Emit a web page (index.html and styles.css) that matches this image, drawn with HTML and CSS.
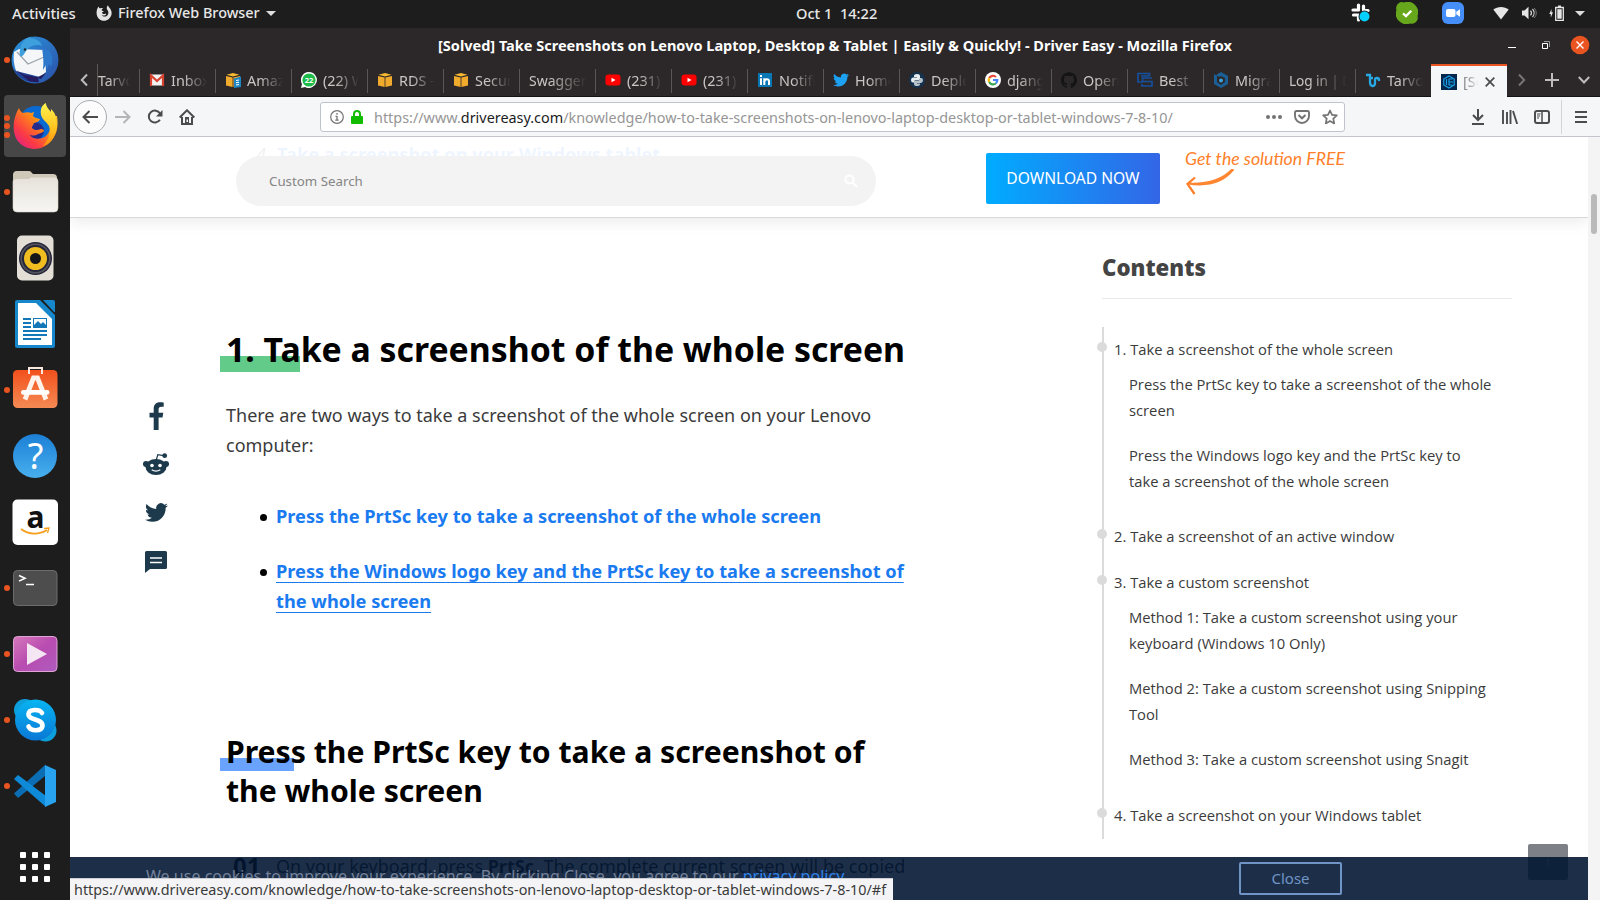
FILE: index.html
```html
<!DOCTYPE html>
<html lang="en">
<head>
<meta charset="utf-8">
<title>Desktop</title>
<link rel="stylesheet" href="styles.css">
</head>
<body>
<svg class="defs" aria-hidden="true">
  <defs>
    <symbol id="bird" viewBox="0 0 24 24"><path d="M23.953 4.57a10 10 0 01-2.825.775 4.958 4.958 0 002.163-2.723c-.951.555-2.005.959-3.127 1.184a4.92 4.92 0 00-8.384 4.482C7.69 8.095 4.067 6.13 1.64 3.162a4.822 4.822 0 00-.666 2.475c0 1.71.87 3.213 2.188 4.096a4.904 4.904 0 01-2.228-.616v.06a4.923 4.923 0 003.946 4.827 4.996 4.996 0 01-2.212.085 4.936 4.936 0 004.604 3.417 9.867 9.867 0 01-6.102 2.105c-.39 0-.779-.023-1.17-.067a13.995 13.995 0 007.557 2.209c9.053 0 13.998-7.496 13.998-13.985 0-.21 0-.42-.015-.63A9.935 9.935 0 0024 4.59z"/></symbol>
    <symbol id="cube" viewBox="0 0 16 16"><path fill="#f0ab2c" d="M1 4l6.600 1.600V15L1 13.400zM15 4L8.400 5.600V15l6.600-1.600z"/><path fill="#f7b92f" d="M1.500 2.800L8 1l6.500 1.800L8 4.600z"/></symbol>
    <symbol id="tube" viewBox="0 0 16 16"><rect x=".5" y="2.500" width="15" height="11" rx="3" fill="#f00"/><path fill="#fff" d="M6.500 5.700v4.600l4-2.300z"/></symbol>
    <linearGradient id="gBlue" x1="0" y1="0" x2="0" y2="1"><stop offset="0" stop-color="#1c7fd6"/><stop offset="1" stop-color="#48b0ee"/></linearGradient>
    <linearGradient id="gSky" x1="0" y1="0" x2="0" y2="1"><stop offset="0" stop-color="#08b5f2"/><stop offset="1" stop-color="#0a77d5"/></linearGradient>
    <linearGradient id="gOrange" x1="0" y1="0" x2="0" y2="1"><stop offset="0" stop-color="#f2501c"/><stop offset="1" stop-color="#f58a54"/></linearGradient>
    <linearGradient id="gPink" x1="0" y1="0" x2="1" y2="1"><stop offset="0" stop-color="#d779bb"/><stop offset=".5" stop-color="#b94cb0"/><stop offset="1" stop-color="#ae5cbf"/></linearGradient>
    <linearGradient id="gFox" x1="1" y1="0" x2="0" y2="1"><stop offset="0" stop-color="#ffd92e"/><stop offset=".4" stop-color="#ff8a16"/><stop offset=".7" stop-color="#fb3a45"/><stop offset="1" stop-color="#d8189a"/></linearGradient>
    <linearGradient id="gFlame" x1="0" y1="0" x2="0" y2="1"><stop offset="0" stop-color="#fff44f"/><stop offset=".6" stop-color="#ffc21f"/><stop offset="1" stop-color="#ff8f10"/></linearGradient>
    <linearGradient id="gBirdBlue" x1="0" y1="0" x2="1" y2="1"><stop offset="0" stop-color="#2b95dd"/><stop offset="1" stop-color="#2b4fa8"/></linearGradient>
    <linearGradient id="gPaper" x1="0" y1="0" x2="0" y2="1"><stop offset="0" stop-color="#e6e2da"/><stop offset="1" stop-color="#f7f6f3"/></linearGradient>
  </defs>
</svg>

<header class="topbar">
  <span class="activities">Activities</span>
  <svg class="fox-mono" viewBox="0 0 16 16"><path fill="#e4e4e4" d="M2.500 1.500c.3 1 .8 1.600 1.500 2 1-.6 2-.6 3-.2L5.500 4.800c.2.900 1 1.200 2.300 1.300-.3.900-1.300 1-1.800 1.500.2 1.200 1.200 1.700 2.500 1.400.8-.3 1.500-.4 1.800.2-.8 1.400-3 1.800-4.600.8 1 1.600 3.400 2 5 .9 2-1.400 2.200-4.400.5-6.100C10.300 3 10.800 1.400 12 .3c.2 1.200 1 2 1.900 3 3 4 1.800 8-1 10.600-3 2.600-7.600 2.300-10.300-.5C-.1 10.600-.1 5.400 2.500 1.500z"/></svg>
  <span class="app-name">Firefox Web Browser</span>
  <i class="caret"></i>
  <span class="clock">Oct 1&nbsp; 14:22</span>
  <div class="tray">
    <svg class="t-slack" width="22" height="22" viewBox="0 0 22 22"><g stroke="#fff" stroke-width="3.200" stroke-linecap="round"><path d="M8.500 3v4M13.500 4v3.500M3 8h5.500M13.500 8.500H18M3.500 13h4M8.500 13v5"/></g><circle cx="14.500" cy="14.500" r="6" fill="#1d1d1d"/><circle cx="14.500" cy="14.500" r="5" fill="#00d0fb"/></svg>
    <svg class="t-skype" width="22" height="22" viewBox="0 0 22 22"><path fill="#67a71c" d="M0 6a6 6 0 018-5.500A10.500 10.500 0 0121.500 14 6 6 0 0114 21.500 10.500 10.500 0 01.5 8z"/><path d="M7 11.300l3 2.800 5.300-5.400" fill="none" stroke="#fff" stroke-width="2.300"/></svg>
    <svg class="t-zoom" width="22" height="22" viewBox="0 0 22 22"><rect width="22" height="22" rx="6" fill="#468ffb"/><rect x="4" y="7" width="9.500" height="8" rx="2" fill="#fff"/><path fill="#fff" d="M14.300 9.800L18 7.300v7.400l-3.700-2.500z"/></svg>
    <svg class="t-wifi" width="16" height="14" viewBox="0 0 16 14"><path fill="#e6e6e6" d="M8 13.500L.3 3.600C4.500.2 11.500.2 15.700 3.600z"/></svg>
    <svg class="t-vol" width="16" height="14" viewBox="0 0 16 14"><path fill="#e6e6e6" d="M1 4.500h2.500L7.500.7v12.600L3.500 9.500H1z"/><path d="M9.500 4.700a3.500 3.500 0 010 4.600M11.500 3a6 6 0 010 8" fill="none" stroke="#d5d5d5" stroke-width="1.200"/><path d="M13.300 2a8 8 0 010 10" fill="none" stroke="#777"/></svg>
    <svg class="t-bat" width="16" height="16" viewBox="0 0 16 16"><path fill="#e6e6e6" d="M2.500 4L.3 9h1.500v3.500L4 7.300H2.500z"/><path d="M6.700 2.500h7.600v12.800H6.700zM9 1.200h3" fill="none" stroke="#e6e6e6" stroke-width="1.300"/><path fill="#e6e6e6" d="M8.300 4.200h4.400v9.500H8.300z"/></svg>
    <i class="caret"></i>
  </div>
</header>

<div class="desktop">
<nav class="dock">
  <a class="slot run"><svg viewBox="0 0 48 48"><circle cx="24" cy="24" r="23.500" fill="url(#gBirdBlue)"/><path fill="#1f3f92" d="M3 34c5 9 14 13 23 12l-4-8z"/><path fill="#f4f6f8" d="M3 16L8 13l26 1 1 22-6 5-24-6c-2-6-3-12-2-19z"/><path fill="#241a5e" d="M5 34l8 5 14 2 8-4-5 6-3-1 1 4c-4 1-9-1-10-1z"/><path d="M6 16l11 12 16-7" fill="none" stroke="#9ba3aa" stroke-width="1.200"/><path fill="#3da0dd" d="M9 14C10 5 17 0 21 .7L18 2c6 0 12 3 13 8-3-2-9-1-12 1-5 3-5 8-9 10-1-2-2-4-1-7z"/><path fill="#2e78cc" d="M31 12c9 1 13 9 9 19l-2-3-2 6-1-5-3 5c1-8 0-15-1-22z"/><circle cx="14" cy="13.500" r="1.300" fill="#1c2730"/></svg></a>
  <a class="slot run3 current"><svg viewBox="0 0 48 48"><circle cx="25" cy="21.500" r="17.500" fill="#0a6ad2"/><circle cx="24" cy="29" r="9" fill="#242b8b"/><path fill="url(#gFox)" d="M8 6c1 3 2 4 4 5 3-1 6-1 8 0l3-1-1 4c2 2 4 2 7 3-1 3-3 3-6 4-1 3-2 3-2 5 3 3 6 2 9 1 2 0 3 1 3 2-2 2-4 2-6 3-3 2-7 2-9 0 4 6 12 6 17 2 6-6 6-14 3-20l8 0c2 12-1 20-7 26C30 50 14 49 6 38 0 28 3 14 8 6z"/><path fill="url(#gFlame)" d="M30 13c-1-6 1-10 5-12 0 4 3 6 5 9V7c5 4 6 11 6 17-1 12-8 19-14 20 6-7 8-15 6-20-2-4-6-5-8-11z"/></svg><i></i><i></i><i></i></a>
  <a class="slot run"><svg viewBox="0 0 48 48"><path fill="#cfc8b8" d="M2 7q0-4 4-4h12q2 0 3 2l1 1h20q4 0 4 4v8H2z"/><rect x="2" y="9.500" width="45" height="34.500" rx="4" fill="url(#gPaper)" stroke="#d8d3c8" stroke-width=".6"/><path fill="#cfc8b8" d="M2 14V8h19l-3 3H6q-4 0-4 3z"/></svg></a>
  <a class="slot"><svg viewBox="0 0 48 48"><rect x="6" y="1.500" width="36.500" height="45" rx="5" fill="#e3dfd6"/><circle cx="24.500" cy="24.500" r="16.500" fill="#26263a"/><circle cx="24.500" cy="24.500" r="14.300" fill="none" stroke="#55555e" stroke-width="1.500"/><circle cx="24.500" cy="24.500" r="11.500" fill="#efbd20"/><circle cx="24.500" cy="24.500" r="5.500" fill="#14161a"/></svg></a>
  <a class="slot"><svg viewBox="0 0 48 48"><path fill="#1587ca" d="M4 2q0-2 2-2h23l15 15v31q0 2-2 2H6q-2 0-2-2z"/><path fill="#fff" d="M7 3h18l16 16v26H7z"/><path fill="#1587ca" d="M32 0h10q2 0 2 2v10h-1z"/><path stroke="#1478b8" stroke-width="2" d="M12 19h8M12 23h8M12 27h8M12 31h24M12 35h24M12 39h18"/><rect x="22.500" y="18.500" width="13" height="9" fill="#fff" stroke="#1478b8"/><path fill="#1478b8" d="M23 28v-3l4-4 3 3 2-2 4 4v2z"/></svg></a>
  <a class="slot run"><svg viewBox="0 0 48 48"><rect x="2" y="4" width="44.500" height="38" rx="4.500" fill="url(#gOrange)"/><path fill="none" stroke="#f6e8df" stroke-width="2" d="M18 8V2h13v6"/><path d="M14 33.500L22.500 12h4L35 33.500" fill="none" stroke="#fff2ea" stroke-width="4.800"/><rect x="10" y="24" width="28.500" height="4.800" rx="2.400" fill="#fff"/></svg></a>
  <a class="slot"><svg viewBox="0 0 48 48"><circle cx="24" cy="24" r="22" fill="url(#gBlue)"/><text x="24.500" y="37" class="glyph" font-size="36">?</text></svg></a>
  <a class="slot"><svg viewBox="0 0 48 48"><rect x="1.500" y="1.500" width="45.500" height="45.500" rx="5" fill="#fff"/><text x="24.500" y="29.500" class="glyph dark" font-size="30">a</text><path d="M10 31c8 6 18 6 26 1" fill="none" stroke="#f7a01f" stroke-width="1.800"/><path d="M33 30.500l5-.5-1.500 5" fill="none" stroke="#f7a01f" stroke-width="1.300"/></svg></a>
  <a class="slot run"><svg viewBox="0 0 48 48"><rect x="2.500" y="6.500" width="43.500" height="35" rx="4" fill="#4d4d4d" stroke="#6c6c6c"/><path d="M8 11.500l6 2.800-6 2.800M15 20.500h8" fill="none" stroke="#fff" stroke-width="1.600"/></svg></a>
  <a class="slot run"><svg viewBox="0 0 48 48"><rect x="2.500" y="6.500" width="43.500" height="35" rx="4" fill="url(#gPink)" stroke="#dfa4d6"/><path fill="#f4e6f2" d="M16 13v22l20-11z"/></svg></a>
  <a class="slot run"><svg viewBox="0 0 48 48"><circle cx="14" cy="14" r="11" fill="#0c9fdb"/><circle cx="34.500" cy="34.500" r="11" fill="#0c9fdb"/><circle cx="24.500" cy="24" r="20.500" fill="url(#gSky)"/><path d="M31 17c-2-4-13-4.500-13.500 1C17 25 32 22 31.500 30c-1 6-12 5-14 .5" fill="none" stroke="#fff" stroke-width="4.600" stroke-linecap="round"/></svg></a>
  <a class="slot run"><svg viewBox="0 0 48 48"><path fill="#0b6eb5" d="M3 31.500l4 4.500L34 14V3z"/><path fill="#0f8ad8" d="M3 17l4-4 28 21v11z"/><path fill="#27a3f0" d="M34 3l11 5v32l-11 5z"/></svg></a>
  <a class="slot apps"><svg viewBox="0 0 32 32"><g fill="#fff"><rect x="1" y="1" width="6" height="6" rx="1"/><rect x="13" y="1" width="6" height="6" rx="1"/><rect x="25" y="1" width="6" height="6" rx="1"/><rect x="1" y="13" width="6" height="6" rx="1"/><rect x="13" y="13" width="6" height="6" rx="1"/><rect x="25" y="13" width="6" height="6" rx="1"/><rect x="1" y="25" width="6" height="6" rx="1"/><rect x="13" y="25" width="6" height="6" rx="1"/><rect x="25" y="25" width="6" height="6" rx="1"/></g></svg></a>
</nav>

<main class="window">
  <div class="titlebar">
    <span class="win-title">[Solved] Take Screenshots on Lenovo Laptop, Desktop &amp; Tablet | Easily &amp; Quickly! - Driver Easy - Mozilla Firefox</span>
    <div class="controls">
      <svg width="10" height="20" viewBox="0 0 10 20"><path d="M1 12.500h8" stroke="#fff"/></svg>
      <svg width="10" height="20" viewBox="0 0 10 20"><path d="M1.500 8.500h5v5h-5z" fill="none" stroke="#fff"/><path d="M3 6.500h5.500V12" fill="none" stroke="#999"/></svg>
      <svg width="20" height="20" viewBox="0 0 20 20"><circle cx="10" cy="10" r="9.300" fill="#e95420"/><path d="M6.500 6.500l7 7M13.500 6.500l-7 7" stroke="#fff" stroke-width="1.400"/></svg>
    </div>
  </div>

  <div class="tabs">
    <div class="scroll-l"><svg width="8" height="14" viewBox="0 0 8 14"><path d="M7 1.500L1.800 7 7 12.500" fill="none" stroke="#bdbdbd" stroke-width="2"/></svg></div>
    <div class="tab cut"><span>Tarvo</span></div>
    <div class="tab"><svg viewBox="0 0 16 16"><path fill="#f2f2f2" d="M1 2.500h14v11H1z"/><path d="M2 14V3.500l6 5.500 6-5.500V14" fill="none" stroke="#d8402f" stroke-width="2.200"/></svg><span>Inbox</span></div>
    <div class="tab"><svg viewBox="0 0 16 16"><use href="#cube"/><path fill="#1d86c4" d="M9 6.500l7-2v10.500l-7 1z"/><path d="M11 8.500l3-.5M11 10.700l3-.4M11 13l3-.5" stroke="#fff"/></svg><span>Amaz</span></div>
    <div class="tab"><svg viewBox="0 0 16 16"><path fill="#fff" d="M8 0a8 8 0 11-4 15L0 16l1-4A8 8 0 018 0z"/><circle cx="8" cy="8" r="6.600" fill="#1dbb49"/><text x="8" y="11" class="badge">22</text></svg><span>(22) W</span></div>
    <div class="tab"><svg><use href="#cube"/></svg><span>RDS -</span></div>
    <div class="tab"><svg><use href="#cube"/></svg><span>Secur</span></div>
    <div class="tab text"><span>Swagger</span></div>
    <div class="tab"><svg><use href="#tube"/></svg><span>(231)</span></div>
    <div class="tab"><svg><use href="#tube"/></svg><span>(231)</span></div>
    <div class="tab"><svg viewBox="0 0 16 16"><path fill="#0a77b5" d="M1 1h14v14H1z"/><path stroke="#fff" stroke-width="2" fill="none" d="M4 6.300V13M4 3v2M7.300 6.300V13M7.300 10q0-2.800 2.500-2.800T12 10v3"/></svg><span>Notifi</span></div>
    <div class="tab"><svg fill="#1da1f2"><use href="#bird"/></svg><span>Home</span></div>
    <div class="tab"><svg viewBox="0 0 16 16"><circle cx="8" cy="8" r="8" fill="#15324e"/><path fill="#e8edf0" d="M5 4q0-2 3-2t3 2v2.500Q11 8 9.500 8h-3Q5 8 5 10.500H4Q2 10.500 2 8t2-2.500h4V5H5z"/><path fill="#b9c3ca" d="M11 12q0 2-3 2t-3-2V9.800Q5 8.500 6.500 8.500h3Q11 8.500 11 6h1q2 0 2 2.300T12 11H8v.5h3z"/></svg><span>Deplo</span></div>
    <div class="tab"><svg viewBox="0 0 16 16"><circle cx="8" cy="8" r="8" fill="#fff"/><g fill="none" stroke-width="2.200"><path stroke="#ea4335" d="M4.200 6A4.300 4.300 0 0111 5"/><path stroke="#fbbc05" d="M4.200 10a4.300 4.300 0 010-4"/><path stroke="#34a853" d="M11 11.200A4.300 4.300 0 014.200 10"/><path stroke="#4285f4" d="M8 8h4.300q0 2-1.300 3.200"/></g></svg><span>djang</span></div>
    <div class="tab"><svg viewBox="0 0 24 24"><path fill="#141414" d="M12 .297c-6.630 0-12 5.373-12 12 0 5.303 3.438 9.800 8.205 11.385.6.113.82-.258.82-.577 0-.285-.01-1.040-.015-2.040-3.338.724-4.042-1.610-4.042-1.610C4.422 18.070 3.633 17.700 3.633 17.700c-1.087-.744.084-.729.084-.729 1.205.084 1.838 1.236 1.838 1.236 1.070 1.835 2.809 1.305 3.495.998.108-.776.417-1.305.76-1.605-2.665-.3-5.466-1.332-5.466-5.930 0-1.310.465-2.380 1.235-3.220-.135-.303-.54-1.523.105-3.176 0 0 1.005-.322 3.300 1.230.96-.267 1.980-.399 3-.405 1.020.006 2.040.138 3 .405 2.280-1.552 3.285-1.230 3.285-1.230.645 1.653.24 2.873.12 3.176.765.84 1.230 1.910 1.230 3.220 0 4.610-2.805 5.625-5.475 5.920.42.36.81 1.096.81 2.220 0 1.606-.015 2.896-.015 3.286 0 .315.21.69.825.57C20.565 22.092 24 17.592 24 12.297c0-6.627-5.373-12-12-12"/></svg><span>Open</span></div>
    <div class="tab"><svg viewBox="0 0 16 16"><path d="M12.500 4V1.500H1V10h5M15 6H5.500v3.500H15V14H5V12M12.500 4H4" fill="none" stroke="#164f9c" stroke-width="1.700"/></svg><span>Best</span></div>
    <div class="tab"><svg viewBox="0 0 16 16"><path fill="#1a5f96" d="M3 3l5-3 7 4v8l-7 4-7-4V2l3 2v6l4 3 4-3V6L8 4 6 5z"/><circle cx="8" cy="8.500" r="2" fill="#3fa3dc"/></svg><span>Migra</span></div>
    <div class="tab text login"><span>Log in | D</span></div>
    <div class="tab"><svg viewBox="0 0 16 16"><path d="M1 3h4v7q0 4 2.500 4T10 11V8q0-2 2-2t2 2v1M5 6h3" fill="none" stroke="#27a9e6" stroke-width="2.300"/></svg><span>Tarvo</span></div>
    <div class="tab active"><svg viewBox="0 0 16 16"><path fill="#03264f" d="M0 0h16v16H0z"/><path d="M8 2l5.200 3v6L8 14l-5.200-3V5zM8 4.500v7M8 5h3.500M8 8h4M8 11h3.500M5.500 5v6" fill="none" stroke="#1aa0e8" stroke-width="1.200"/></svg><span>[So</span><svg class="x" viewBox="0 0 10 10"><path d="M.7.7l8.600 8.600M9.300.7L.7 9.300" stroke="#4a4a4a" stroke-width="1.700"/></svg></div>
    <div class="tab-tools">
      <svg width="8" height="14" viewBox="0 0 8 14"><path d="M1 1.500L6.200 7 1 12.500" fill="none" stroke="#757575" stroke-width="2"/></svg>
      <svg width="14" height="14" viewBox="0 0 14 14"><path d="M7 0v14M0 7h14" stroke="#bdbdbd" stroke-width="2"/></svg>
      <svg width="12" height="8" viewBox="0 0 12 8"><path d="M.8 1L6 6.500 11.200 1" fill="none" stroke="#bdbdbd" stroke-width="2"/></svg>
    </div>
  </div>

  <div class="toolbar">
    <div class="back"><svg width="16" height="14" viewBox="0 0 16 14"><path d="M7.500 1L1.500 7l6 6M1.500 7H16" fill="none" stroke="#4c4c4c" stroke-width="2"/></svg></div>
    <svg class="fwd" width="16" height="14" viewBox="0 0 16 14"><path d="M8.500 1l6 6-6 6M14.500 7H0" fill="none" stroke="#b4b5b6" stroke-width="2"/></svg>
    <svg class="reload" width="16" height="16" viewBox="0 0 16 16"><path d="M12.900 10.800A6 6 0 1113 4.500" fill="none" stroke="#4c4c4c" stroke-width="2"/><path fill="#4c4c4c" d="M15.500 1v6.500H9z"/></svg>
    <svg class="home" width="16" height="16" viewBox="0 0 16 16"><path d="M.7 8.500L8 1.300l7.300 7.200M3 8v7h10V8" fill="none" stroke="#4c4c4c" stroke-width="2"/><path fill="#4c4c4c" d="M6 8h4v6H6z"/><path fill="#f5f6f7" d="M7.500 10.500h1.500V13H7.500z"/></svg>
    <div class="url">
      <svg width="14" height="14" viewBox="0 0 14 14"><circle cx="7" cy="7" r="6.300" fill="none" stroke="#737373" stroke-width="1.200"/><path d="M7 3v1.800M7 6v4M5.500 6.300H7M5.300 10.200h3.400" stroke="#737373" stroke-width="1.300"/></svg>
      <svg class="lock" width="12" height="14" viewBox="0 0 12 14"><rect y="6" width="12" height="8" rx="1" fill="#12bc00"/><path d="M3 7V4q0-3 3-3t3 3v3" fill="none" stroke="#12bc00" stroke-width="2"/></svg>
      <span class="addr">https://www.<b>drivereasy.com</b>/knowledge/how-to-take-screenshots-on-lenovo-laptop-desktop-or-tablet-windows-7-8-10/</span>
      <div class="url-tools">
        <svg width="16" height="4" viewBox="0 0 16 4"><g fill="#737373"><circle cx="2" cy="2" r="2"/><circle cx="8" cy="2" r="2"/><circle cx="14" cy="2" r="2"/></g></svg>
        <svg width="16" height="14" viewBox="0 0 16 14"><path d="M2.500 1h11q1.500 0 1.500 1.500V6a7 7 0 01-14 0V2.500Q1 1 2.500 1z" fill="none" stroke="#737373" stroke-width="1.900"/><path d="M4.500 5L8 8.300 11.500 5" fill="none" stroke="#737373" stroke-width="2"/></svg>
        <svg width="16" height="16" viewBox="0 0 16 16"><path d="M8 1.500l2 4.300 4.800.6-3.500 3.200.9 4.800L8 12l-4.200 2.400.9-4.800L1.200 6.400 6 5.800z" fill="none" stroke="#737373" stroke-width="1.700" stroke-linejoin="round"/></svg>
      </div>
    </div>
    <div class="tools">
      <svg width="12" height="16" viewBox="0 0 12 16"><path d="M6 0v11M1 6l5 5 5-5M0 15h12" fill="none" stroke="#4c4c4c" stroke-width="2"/></svg>
      <svg width="16" height="14" viewBox="0 0 16 14"><path d="M1 0v14M5 2v12M8.500 0v14M11 1l4.200 13" fill="none" stroke="#4c4c4c" stroke-width="1.900"/></svg>
      <svg width="16" height="14" viewBox="0 0 16 14"><rect x="1" y="1" width="14" height="12" rx="2" fill="none" stroke="#4c4c4c" stroke-width="2"/><path d="M8 1v12" stroke="#4c4c4c" stroke-width="1.500"/><path d="M3 4h3.500M3 6h3M3 8h2" stroke="#4c4c4c"/></svg>
      <i class="sep"></i>
      <svg width="12" height="12" viewBox="0 0 12 12"><path d="M0 1h12M0 6h12M0 11h12" stroke="#4c4c4c" stroke-width="2"/></svg>
    </div>
  </div>

  <div class="viewport">
    <div class="page">
      <div class="social">
        <svg width="15" height="28" viewBox="0 0 15 28"><path d="M4.700 28V15.500H.5v-4.700h4.200V7.200C4.700 2.500 7 .3 11 .3c1.500 0 3 .2 3.700.3v4.200h-2.200c-2.200 0-2.900 1-2.900 2.700v3.300h4.700l-.8 4.700H9.600V28z"/></svg>
        <svg width="26" height="22" viewBox="0 0 26 22"><ellipse cx="13" cy="14" rx="10.500" ry="8"/><circle cx="3" cy="11" r="3"/><circle cx="23" cy="11" r="3"/><circle cx="21.700" cy="2.700" r="2.400"/><path d="M13.300 7l1.500-5.300 6 1" fill="none" stroke="#1d3a4c" stroke-width="1.200"/><circle cx="9" cy="12.500" r="1.800" fill="#fff"/><circle cx="17" cy="12.500" r="1.800" fill="#fff"/><path d="M8.700 16.800q4.300 2.600 8.600 0" fill="none" stroke="#fff" stroke-width="1.300"/></svg>
        <svg width="23" height="23"><use href="#bird"/></svg>
        <svg width="22" height="22" viewBox="0 0 22 22"><path d="M1.500 0h19Q22 0 22 1.500v15q0 1.500-1.500 1.500H5l-5 4V1.500Q0 0 1.500 0z"/><path d="M5 7h12M5 11.500h12" stroke="#fff" stroke-width="1.500"/></svg>
      </div>
      <article class="article">
        <p class="passed"><em>4.</em><a>Take a screenshot on your Windows tablet</a></p>
        <h1>1. Take a screenshot of the whole screen</h1>
        <p>There are two ways to take a screenshot of the whole screen on your Lenovo computer:</p>
        <ul>
          <li><a>Press the PrtSc key to take a screenshot of the whole screen</a></li>
          <li><a class="hover">Press the Windows logo key and the PrtSc key to take a screenshot of the whole screen</a></li>
        </ul>
        <h2>Press the PrtSc key to take a screenshot of the whole screen</h2>
        <div class="step"><b class="num">01</b><span>On your keyboard, press <b>PrtSc</b>. The complete current screen will be copied</span></div>
      </article>
      <aside class="contents">
        <h3>Contents</h3>
        <ol class="toc">
          <li class="dot">1. Take a screenshot of the whole screen</li>
          <li class="sub">Press the PrtSc key to take a screenshot of the whole screen</li>
          <li class="sub">Press the Windows logo key and the PrtSc key to<br>take a screenshot of the whole screen</li>
          <li class="dot after">2. Take a screenshot of an active window</li>
          <li class="dot">3. Take a custom screenshot</li>
          <li class="sub">Method 1: Take a custom screenshot using your keyboard (Windows 10 Only)</li>
          <li class="sub">Method 2: Take a custom screenshot using Snipping Tool</li>
          <li class="sub">Method 3: Take a custom screenshot using Snagit</li>
          <li class="dot after last">4. Take a screenshot on your Windows tablet</li>
        </ol>
      </aside>

      <div class="site-header">
        <div class="search"><span>Custom Search</span><svg width="14" height="14" viewBox="0 0 14 14"><circle cx="5.500" cy="5.500" r="4" fill="none" stroke="#fff" stroke-width="2"/><path d="M8.500 8.500l4.500 4.500" stroke="#fff" stroke-width="2.200"/></svg></div>
        <a class="download">DOWNLOAD NOW</a>
        <div class="promo"><span>Get the solution FREE</span><svg width="50" height="28" viewBox="0 0 50 28"><path d="M47 1C38 12 24 18 2 14.500 22 15.500 36 11 46 .5z" fill="#ff8630" stroke="#ff8630" stroke-width="1.800"/><path d="M9 8.500L1.500 15 8.500 25" fill="none" stroke="#ff7f2a" stroke-width="2.300"/></svg></div>
      </div>
      <div class="to-top">↑</div>
      <div class="cookies"><span>We use cookies to improve your experience. By clicking Close, you agree to our <a>privacy policy</a>.</span><button>Close</button></div>
      <div class="status">https://www.drivereasy.com/knowledge/how-to-take-screenshots-on-lenovo-laptop-desktop-or-tablet-windows-7-8-10/#f</div>
    </div>
    <div class="scrollbar"><i></i></div>
  </div>
</main>
</div>
</body>
</html>
```
FILE: styles.css
```css
* { box-sizing: border-box; margin: 0; padding: 0; }
body { width: 1600px; height: 900px; overflow: hidden; background: #1d1d1d; font: 14.4px "Noto Sans", "Open Sans", sans-serif; }
svg { display: block; flex: none; }
.defs { position: absolute; width: 0; height: 0; }

/* Top panel */
.topbar { display: flex; align-items: center; height: 28px; padding-left: 12px; color: #e8e8e8; font-weight: 500; line-height: 26px; padding-bottom: 2px; white-space: nowrap; }
.activities { width: 84px; font-size: 14.8px; }
.fox-mono { width: 16px; height: 16px; margin-right: 6px; }
.app-name { width: 142px; }
.caret { width: 0; height: 0; border: 5px solid transparent; border-top-color: #dedede; border-bottom-width: 0; margin-left: 6px; }
.clock { margin-left: 520px; width: 80px; font-size: 14.6px; }
.tray { display: flex; align-items: center; margin-left: auto; padding-right: 15px; }
.t-slack { margin-right: 24px; }
.t-skype { margin-right: 24px; }
.t-zoom { margin-right: 29px; }
.t-wifi { margin-right: 12px; }
.t-vol { margin-right: 12px; }
.tray .caret { margin-left: 10px; }

.desktop { display: flex; height: 872px; }

/* Dock */
.dock { width: 70px; flex: none; display: flex; flex-direction: column; }
.slot { position: relative; flex: none; height: 66px; padding: 8px 0 0 11px; }
.slot > svg { width: 48px; height: 48px; }
.slot:before { content: ""; position: absolute; left: 4px; top: 29px; width: 6px; height: 6px; border-radius: 50%; }
.run:before { background: #e95420; }
.current > svg { position: relative; }
.current:before { left: 4px; top: 1px; width: 62px; height: 62px; border-radius: 4px; background: #474747; }
.slot i { position: absolute; left: 4px; top: 21px; width: 6px; height: 6px; border-radius: 50%; background: #e95420; }
.slot i:nth-of-type(2) { top: 29px; }
.slot i:nth-of-type(3) { top: 37.500px; }
.slot.apps { height: 48px; margin-top: 31px; padding: 0 0 0 19px; }
.slot.apps svg { width: 32px; height: 32px; }
.glyph { fill: #fff; text-anchor: middle; font-family: "Noto Sans", sans-serif; }
.glyph.dark { fill: #111; font-weight: 700; }
.badge { fill: #fff; font: 700 7.500px "Noto Sans", sans-serif; text-anchor: middle; }

/* Window chrome */
.window { flex: 1; min-width: 0; display: flex; flex-direction: column; background: #2c2829; }
.titlebar { display: flex; align-items: center; height: 36px; padding: 0 0 2px 368px; color: #fff; }
.win-title { width: 800px; font-weight: 700; font-size: 14.520px; white-space: nowrap; line-height: 34px; }
.controls { display: flex; margin-left: auto; padding-right: 10px; }
.controls svg { margin-left: 19px; }
.controls svg:nth-child(2) { margin-left: 24px; }
.tabs { display: flex; height: 33px; color: #c9c7c5; border-bottom: 1px solid #151313; }
.scroll-l { width: 28px; display: flex; align-items: center; justify-content: center; border-right: 1px solid #5b5858; }
.tab { position: relative; display: flex; align-items: center; gap: 6px; width: 76px; flex: none; padding-left: 10px; }
.tab:before { content: ""; position: absolute; left: 0; top: 5px; width: 1px; height: 24px; background: #595656; }
.tab > svg { width: 16px; height: 16px; }
.tab span { width: 36px; white-space: nowrap; overflow: hidden; line-height: 28px; padding-top: 2px; -webkit-mask-image: linear-gradient(90deg, #000 35%, transparent 100%); mask-image: linear-gradient(90deg, #000 35%, transparent 100%); }
.tab.text span { width: 58px; font-size: 14px; }
.tab.login span { letter-spacing: -.1px; font-size: 13.700px; }
.tab.cut { width: 41px; padding-left: 0; }
.tab.cut span { width: 32px; font-size: 14px; }
.tab.cut:before { display: none; }
.tab.active { background: #f5f6f7; border-top: 2px solid #e95420; height: 33px; width: 75.500px; padding-left: 10px; color: #8c8c8c; gap: 6px; }
.tab.active:before { display: none; }
.tab.active span { width: 15px; padding-top: 0; }
.tab.active .x { width: 10px; height: 10px; margin-left: 1px; }
.tab-tools { display: flex; flex: 1; align-items: center; gap: 19px; padding-left: 11px; }

.toolbar { display: flex; align-items: center; height: 40px; background: #f5f6f7; border-bottom: 1px solid #c2c5cb; padding: 1px 0 0 3px; }
.back { width: 34px; height: 34px; border: 1px solid #a9abae; border-radius: 50%; background: #fcfcfc; display: flex; align-items: center; justify-content: center; }
.fwd { margin-left: 8px; }
.reload { margin-left: 16px; }
.home { margin-left: 16px; }
.url { display: flex; align-items: center; width: 1025px; height: 30px; margin-left: 125px; padding: 0 6px 0 9px; border: 1px solid #bfc3cb; border-radius: 3px; background: #fff; }
.lock { margin: 0 11px 0 7px; }
.addr { color: #969696; white-space: nowrap; line-height: 26px; padding-top: 2px; }
.addr b { color: #1c1c1c; font-weight: 400; }
.url-tools { display: flex; align-items: center; gap: 12px; margin-left: auto; }
.tools { display: flex; align-items: center; gap: 18px; margin-left: auto; padding-right: 13px; }
.tools svg:nth-child(2) { margin-right: -2px; margin-left: 0; }
.tools .sep { width: 1px; height: 34px; background: #d3d5d8; margin-left: -7px; margin-right: -5px; }

/* Web page */
.viewport { display: flex; flex: 1; min-height: 0; background: #fff; }
.page { position: relative; flex: 1; display: flex; overflow: hidden; background: #fff; }
.scrollbar { width: 12px; background: #f4f4f4; padding: 57px 0 0 3px; }
.scrollbar i { display: block; width: 6px; height: 40px; border-radius: 3px; background: #bababa; }
.social { width: 156px; padding: 265px 0 0 16px; display: flex; flex-direction: column; align-items: center; fill: #1d3a4c; flex: none; }
.social svg:nth-child(2) { margin-top: 23px; }
.social svg:nth-child(3) { margin-top: 26px; }
.social svg:nth-child(4) { margin-top: 27px; }

.article { width: 690px; flex: none; padding-top: 2px; font-size: 18px; line-height: 30px; color: #3b3b3b; }
.article a { color: #1a7af0; font-weight: 700; font-size: 18.220px; }
.passed { padding-left: 30px; white-space: nowrap; }
.passed em { display: inline-block; width: 21px; }
.article h1, .article h2 { position: relative; z-index: 0; color: #000; font-weight: 700; }
.article h1 { margin-top: 158px; font-size: 33.800px; line-height: 44px; white-space: nowrap; }
.article h1:before, .article h2:before { content: ""; position: absolute; z-index: -1; left: -6px; top: 29px; width: 80px; height: 16px; background: #63cb89; }
.article h1 + p { margin-top: 29px; width: 684px; }
.article ul { list-style: none; margin: 41px 0 0 50px; width: 634px; }
.article li { position: relative; }
.article li + li { margin-top: 25px; }
.article li:before { content: ""; position: absolute; left: -16px; top: 13px; width: 7px; height: 7px; border-radius: 50%; background: #000; }
.article a.hover { text-decoration: underline 1px; text-underline-offset: 4px; text-decoration-skip-ink: none; }
.article h2 { margin-top: 116px; font-size: 30.160px; line-height: 39px; width: 684px; }
.article h2:before { top: 26px; width: 74px; height: 13px; background: #69a3fd; }
.step { display: flex; margin-top: 41px; white-space: nowrap; }
.num { flex: none; width: 50px; padding-left: 7px; font-size: 24px; color: #222; }

.contents { margin-left: 186px; flex: none; width: 410px; padding-top: 115px; font-family: "Open Sans", sans-serif; color: #3b3b3b; }
.contents h3 { height: 47px; border-bottom: 1px solid #e9e9e9; font-size: 22.200px; font-weight: 800; line-height: 31px; color: #444; }
.toc { list-style: none; margin-top: 28px; border-left: 2px solid #dbdbdb; font-size: 14.750px; line-height: 26px; height: 512px; padding-top: 9px; }
.toc .dot { position: relative; padding-left: 10px; margin-bottom: 9px; }
.toc .dot:before { content: ""; position: absolute; left: -7px; top: 6px; width: 10px; height: 10px; border-radius: 50%; background: #dbdbdb; }
.toc .sub { margin-left: 25px; width: 366px; margin-bottom: 19px; }
.toc .after { margin-top: 29px; margin-bottom: 20px; }
.toc .last { margin-top: 30px; }

/* Layers fixed over the page */
.site-header { position: absolute; inset: 0 0 auto 0; height: 81px; display: flex; align-items: flex-start; background: rgba(255, 255, 255, .925); border-bottom: 1px solid #d9d9d9; box-shadow: 0 4px 14px rgba(0, 0, 0, .08); padding-left: 166px; }
.search { display: flex; align-items: center; justify-content: space-between; width: 640px; height: 50px; margin-top: 19px; padding: 0 18px 0 33px; border-radius: 25px; background: #f3f3f3; color: #858585; font-size: 13.300px; }
.download { width: 174px; height: 51px; margin: 16px 0 0 110px; border-radius: 2px; background: linear-gradient(90deg, #00acff, #3366e6); color: #fff; font-size: 15.600px; line-height: 50px; text-align: center; }
.promo { margin: 10px 0 0 25px; width: 166px; font: italic 400 17.700px/24px Lato, sans-serif; color: #ff7f2a; white-space: nowrap; }
.promo svg { margin: -2px 0 0 1px; }
.to-top { position: absolute; right: 20px; top: 707px; width: 40px; height: 36px; border-radius: 2px; background: #7d8087; color: #c9cdd4; text-align: center; line-height: 36px; }
.cookies { position: absolute; inset: 720px 0 0 0; display: flex; align-items: flex-start; padding: 5px 0 0 76px; background: rgba(0, 20, 49, .885); color: #73819a; font-size: 16.060px; line-height: 28px; white-space: nowrap; }
.cookies a { color: #2f82ea; }
.cookies span { width: 1093px; }
.cookies button { width: 103px; height: 33px; padding-bottom: 2px; border: 2px solid #7094c6; border-radius: 2px; background: none; color: #7094c6; font: 15px "Noto Sans", sans-serif; }
.status { position: absolute; left: 0; bottom: 0; width: 823px; height: 22px; padding-left: 4px; background: #f4f4f6; border-top: 1px solid #cfcfd3; color: #3a3a3a; font-size: 14.390px; line-height: 21px; white-space: nowrap; }
```
